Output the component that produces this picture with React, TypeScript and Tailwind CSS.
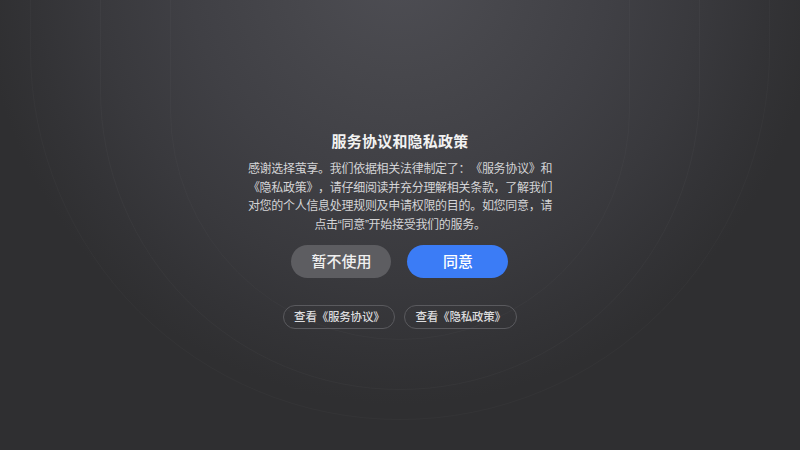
import React from "react";

export default function App() {
  const font = { fontFamily: '"Noto Sans CJK SC", "Noto Sans", sans-serif' };
  const q = "font-['Liberation_Sans',sans-serif]";
  return (
    <div
      className="relative w-[800px] h-[450px] overflow-hidden bg-[#2e2e30] flex flex-col items-center pt-[130px] [text-spacing-trim:space-all]"
      style={font}
    >
      <div className="pointer-events-none absolute inset-0 bg-[radial-gradient(ellipse_420px_440px_at_50%_-8%,#4e4e54_0%,#47474c_25%,#404045_50%,#39393d_72%,#333336_88%,#2f2f31_100%)]" />
      <div className="pointer-events-none absolute left-[30px] top-[-420px] w-[740px] h-[840px] rounded-full border border-[#ffffff06]" />
      <div className="pointer-events-none absolute left-[100px] top-[-400px] w-[600px] h-[790px] rounded-full border border-[#ffffff07]" />
      <div className="pointer-events-none absolute left-[170px] top-[-360px] w-[460px] h-[700px] rounded-full border border-[#ffffff06]" />

      <div className="relative flex flex-col items-center">
        <h1 className="text-[15px] leading-[22px] font-semibold text-[#f2f2f2] tracking-[0.2px]">
          服务协议和隐私政策
        </h1>
        <div className="mt-[7px] text-center text-[12px] leading-[18.5px] text-[#d4d4d6] tracking-[-0.3px]">
          <div>感谢选择萤享。我们依据相关法律制定了：《服务协议》和</div>
          <div>《隐私政策》，请仔细阅读并充分理解相关条款，了解我们</div>
          <div>对您的个人信息处理规则及申请权限的目的。如您同意，请</div>
          <div>
            点击<span className={q}>“</span>同意<span className={q}>”</span>开始接受我们的服务。
          </div>
        </div>
        <div className="mt-[11px] flex gap-[16px]">
          <button className="w-[100px] h-[33px] rounded-full bg-[#5d5d61] text-[15px] font-medium text-[#f0f0f0]">
            暂不使用
          </button>
          <button className="w-[101px] h-[33px] rounded-full bg-[#3b7cf6] text-[15px] font-medium text-white">
            同意
          </button>
        </div>
        <div className="mt-[27px] flex gap-[9px]">
          <button className="h-[24px] px-[10px] rounded-full border border-[#5a5a5e] text-[11.5px] font-medium text-[#dcdcde] leading-none tracking-[-0.2px]">
            查看《服务协议》
          </button>
          <button className="h-[24px] px-[10px] rounded-full border border-[#5a5a5e] text-[11.5px] font-medium text-[#dcdcde] leading-none tracking-[-0.2px]">
            查看《隐私政策》
          </button>
        </div>
      </div>
    </div>
  );
}
